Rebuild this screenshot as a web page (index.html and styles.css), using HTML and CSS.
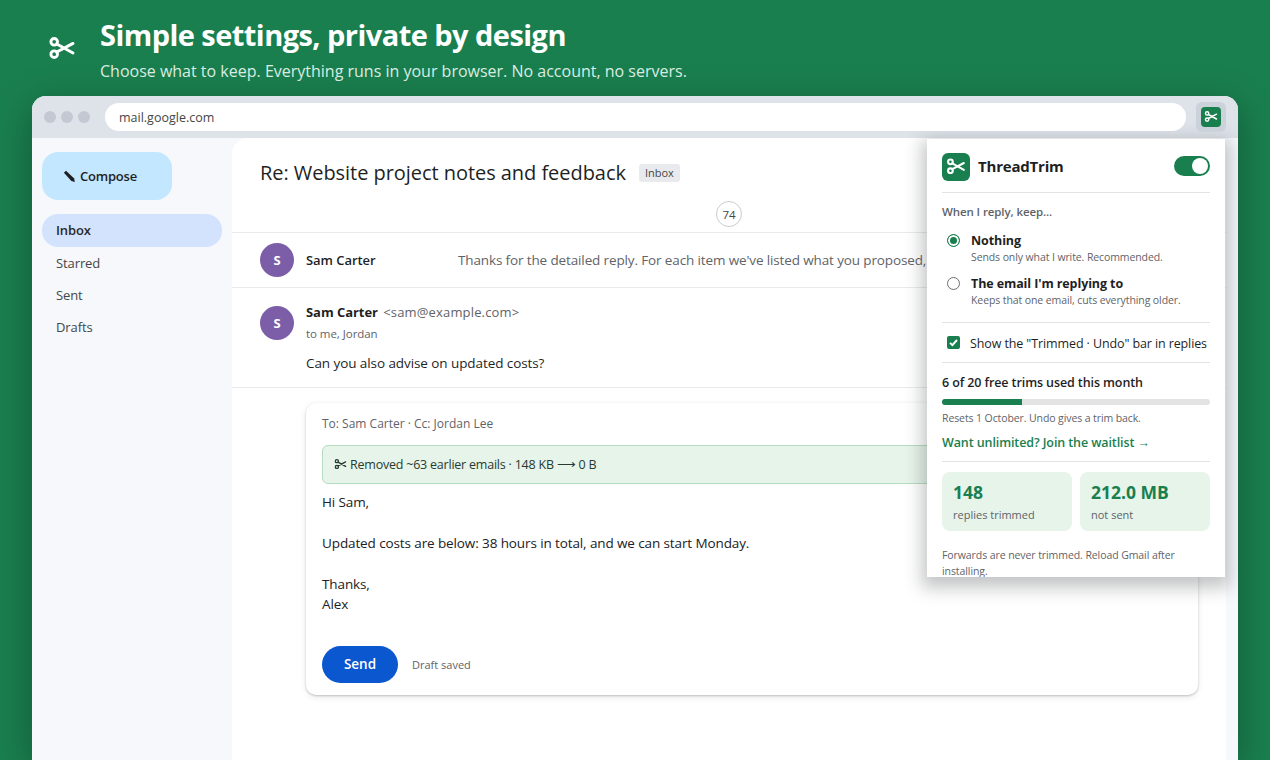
FILE: index.html
```html
<!DOCTYPE html>
<html lang="en">
<head>
<meta charset="utf-8">
<title>ThreadTrim</title>
<link rel="stylesheet" href="styles.css">
</head>
<body>
<svg class="defs" width="0" height="0" aria-hidden="true">
  <symbol id="scissors" viewBox="0 0 28 28">
    <circle cx="6.2" cy="6.8" r="3.3" fill="none" stroke="currentColor" stroke-width="2.9"/>
    <circle cx="6.2" cy="19.2" r="3.3" fill="none" stroke="currentColor" stroke-width="2.9"/>
    <path d="M8.8 9 25 18M8.8 17 25 8.4" fill="none" stroke="currentColor" stroke-width="2.9" stroke-linecap="round"/>
  </symbol>
</svg>
<header class="hero">
  <svg class="hero-icon"><use href="#scissors"/></svg>
  <div class="hero-text">
    <h1>Simple settings, private by design</h1>
    <p>Choose what to keep. Everything runs in your browser. No account, no servers.</p>
  </div>
</header>
<div class="browser">
  <div class="toolbar">
    <div class="dots"><span></span><span></span><span></span></div>
    <div class="url">mail.google.com</div>
    <div class="ext"><span class="ext-logo"><svg><use href="#scissors"/></svg></span></div>
  </div>
  <div class="gmail">
    <aside class="side">
      <button class="compose"><svg class="pen" viewBox="0 0 14 14"><path d="M1 3 3.2 .8l8.6 8.2 1 3.8-3.8-1z" fill="#1f1f1f"/></svg>Compose</button>
      <nav class="nav">
        <a class="active">Inbox</a>
        <a>Starred</a>
        <a>Sent</a>
        <a>Drafts</a>
      </nav>
    </aside>
    <main class="mail">
      <div class="subject"><h2>Re: Website project notes and feedback</h2><span class="chip">Inbox</span></div>
      <div class="count-row"><span class="count">74</span></div>
      <div class="collapsed">
        <span class="avatar">S</span>
        <span class="c-name">Sam Carter</span>
        <span class="c-snip">Thanks for the detailed reply. For each item we've listed what you proposed,</span>
      </div>
      <div class="message">
        <span class="avatar">S</span>
        <div class="m-body">
          <div class="m-from"><b>Sam Carter</b> <span>&lt;sam@example.com&gt;</span></div>
          <div class="m-to">to me, Jordan</div>
          <div class="m-text">Can you also advise on updated costs?</div>
        </div>
      </div>
      <section class="card">
        <div class="to">To: Sam Carter · Cc: Jordan Lee</div>
        <div class="trimmed"><svg><use href="#scissors"/></svg>Removed ~63 earlier emails · 148 KB ⟶ 0 B</div>
        <div class="draft">Hi Sam,<br><br>Updated costs are below: 38 hours in total, and we can start Monday.<br><br>Thanks,<br>Alex</div>
        <div class="actions"><button class="send">Send</button><span class="saved">Draft saved</span></div>
      </section>
    </main>
  </div>
  <div class="popup">
    <div class="p-head">
      <span class="p-logo"><svg><use href="#scissors"/></svg></span>
      <span class="p-name">ThreadTrim</span>
      <span class="toggle"><i></i></span>
    </div>
    <div class="p-sec p-keep">
      <div class="p-label">When I reply, keep...</div>
      <div class="opt"><span class="radio on"></span><div><b>Nothing</b><small>Sends only what I write. Recommended.</small></div></div>
      <div class="opt"><span class="radio"></span><div><b>The email I'm replying to</b><small>Keeps that one email, cuts everything older.</small></div></div>
    </div>
    <div class="p-sec p-check">
      <span class="check"><svg viewBox="0 0 13 13"><path d="M3 6.8 5.4 9.2 10 4" fill="none" stroke="#fff" stroke-width="1.9"/></svg></span>
      <span>Show the "Trimmed · Undo" bar in replies</span>
    </div>
    <div class="p-sec p-usage">
      <div class="u-title">6 of 20 free trims used this month</div>
      <div class="bar"><div class="fill" style="width:30%"></div></div>
      <div class="u-note">Resets 1 October. Undo gives a trim back.</div>
      <a class="u-link">Want unlimited? Join the waitlist →</a>
    </div>
    <div class="stats">
      <div class="stat"><b>148</b><span>replies trimmed</span></div>
      <div class="stat"><b>212.0 MB</b><span>not sent</span></div>
    </div>
    <p class="foot">Forwards are never trimmed. Reload Gmail after installing.</p>
  </div>
</div>
</body>
</html>
```
FILE: styles.css
```css
* { box-sizing: border-box; }
html, body { height: 100%; }
body {
  margin: 0;
  height: 760px;
  overflow: hidden;
  background: #1a7f4f;
  font-family: "Open Sans", "Noto Sans", "Liberation Sans", sans-serif;
  color: #1f1f1f;
  display: flex;
  flex-direction: column;
}
.defs { position: absolute; }
.hero {
  height: 96px;
  flex: none;
  display: flex;
  align-items: center;
  gap: 24px;
  padding: 0 0 0 48px;
  color: #fff;
}
.hero-icon { width: 28px; height: 28px; flex: none; margin-top: 2px; }
.hero-text { margin-top: 2px; }
.hero h1 { margin: 0; font-size: 29px; line-height: 38px; font-weight: 700; letter-spacing: -0.55px; }
.hero p { margin: 6px 0 0; font-size: 16px; line-height: 22px; color: #dcefe4; }

.browser {
  position: relative;
  margin: 0 32px;
  flex: 1;
  min-height: 0;
  background: #f6f8fc;
  border-radius: 14px 14px 0 0;
  overflow: hidden;
  box-shadow: 0 10px 40px rgba(0,0,0,.3);
  display: flex;
  flex-direction: column;
}
.toolbar {
  height: 42px;
  flex: none;
  background: #dee3ea;
  display: flex;
  align-items: flex-start;
  padding: 7px 12px 0 12px;
  position: relative;
}
.dots { display: flex; gap: 5px; width: 61px; padding-top: 8px; flex: none; }
.dots span { width: 12px; height: 12px; border-radius: 50%; background: #c3c8d2; }
.url {
  flex: 1;
  height: 28px;
  background: #fff;
  border-radius: 14px;
  font-size: 12.5px;
  line-height: 29px;
  padding-left: 14px;
  color: #444746;
  position: relative;
  z-index: 3;
}
.ext {
  width: 30px;
  height: 30px;
  margin: -1px 0 0 10px;
  background: #ccd2da;
  border-radius: 6px;
  display: flex;
  align-items: center;
  justify-content: center;
  flex: none;
  position: relative;
  z-index: 3;
}
.ext-logo {
  width: 20px; height: 20px;
  background: #1a7f4f;
  border-radius: 4px;
  color: #fff;
  display: flex; align-items: center; justify-content: center;
}
.ext-logo svg { width: 14px; height: 14px; }

.gmail { flex: 1; min-height: 0; display: flex; background: #f6f8fc; }
.side { width: 200px; flex: none; padding: 14px 10px 0; }
.compose {
  width: 130px;
  height: 48px;
  border: 0;
  border-radius: 16px;
  background: #c2e7ff;
  font: 600 13px "Open Sans", sans-serif;
  color: #1f1f1f;
  display: flex;
  align-items: center;
  gap: 4px;
  padding: 0 0 0 21px;
  letter-spacing: -0.2px;
}
.pen { width: 13px; height: 13px; }
.nav { margin-top: 14px; display: flex; flex-direction: column; }
.nav a {
  height: 32px;
  line-height: 32px;
  padding-left: 14px;
  border-radius: 16px;
  font-size: 13px;
  color: #444746;
  letter-spacing: -0.1px;
}
.nav a.active { height: 33px; line-height: 33px; background: #d3e3fd; color: #2a2a2a; font-weight: 600; }

.mail {
  flex: 1;
  min-width: 0;
  margin-right: 12px;
  background: #fff;
  border-radius: 16px 16px 0 0;
  overflow: hidden;
}
.subject { height: 62px; padding: 6px 28px 0; display: flex; align-items: center; gap: 13px; white-space: nowrap; }
.subject h2 { margin: 0; font-size: 20px; font-weight: 400; letter-spacing: -0.05px; color: #1f1f1f; }
.chip { background: #e8eaed; border-radius: 3px; font-size: 11px; height: 18px; line-height: 18px; padding: 0 6px; color: #444746; margin-top: 2px; }
.count-row { height: 32px; display: flex; justify-content: center; padding-top: 1px; }
.count {
  width: 26px; height: 26px;
  border: 1px solid #c9ccd0;
  border-radius: 50%;
  font-size: 11.5px;
  line-height: 25px;
  text-align: center;
  color: #444746;
  background: #fff;
}
.collapsed {
  height: 56px;
  border-top: 1px solid #e8eaed;
  border-bottom: 1px solid #e8eaed;
  padding: 0 28px;
  display: flex;
  align-items: center;
  white-space: nowrap;
  font-size: 13px;
  overflow: hidden;
}
.avatar {
  width: 34px; height: 34px;
  flex: none;
  border-radius: 50%;
  background: #7b5ea7;
  color: #fff;
  font-weight: 700;
  font-size: 13px;
  line-height: 34px;
  text-align: center;
}
.c-name { width: 152px; margin-left: 12px; font-weight: 600; flex: none; letter-spacing: -0.05px; }
.c-snip { color: #5f6368; font-size: 13.5px; letter-spacing: -0.13px; }
.message {
  height: 100px;
  border-bottom: 1px solid #e8eaed;
  padding: 18px 28px 0;
  display: flex;
  gap: 12px;
}
.m-from { font-size: 13px; line-height: 16px; margin-top: -2px; letter-spacing: -0.05px; }
.m-from b { font-weight: 700; }
.m-from span { color: #5f6368; font-size: 13px; margin-left: 2px; letter-spacing: 0.16px; }
.m-to { font-size: 11.5px; line-height: 16px; color: #5f6368; margin-top: 6px; letter-spacing: -0.05px; }
.m-text { font-size: 13.5px; line-height: 20px; margin-top: 11px; letter-spacing: -0.08px; }
.card {
  margin: 15px 28px 0 74px;
  height: 292px;
  background: #fff;
  border-radius: 10px;
  box-shadow: 0 1px 2px rgba(60,64,67,.25), 0 2px 6px rgba(60,64,67,.12);
  padding: 12px 16px 0;
  display: flex;
  flex-direction: column;
}
.to { font-size: 12px; line-height: 18px; color: #5f6368; }
.trimmed {
  margin-top: 12px;
  height: 39px;
  background: #e6f4ea;
  border: 1px solid #b5dcc0;
  border-radius: 6px;
  padding-left: 11px;
  display: flex;
  align-items: center;
  gap: 3px;
  font-size: 12.5px;
  color: #2a3a30;
  letter-spacing: -0.22px;
}
.trimmed svg { width: 13px; height: 13px; }
.draft { margin-top: 8px; font-size: 13.5px; line-height: 20.45px; letter-spacing: -0.11px; color: #202124; }
.actions { margin-top: 31px; display: flex; align-items: center; gap: 14px; }
.send {
  width: 76px; height: 37px;
  border: 0; border-radius: 19px;
  background: #0b57d0;
  color: #fff;
  font: 600 13.5px "Open Sans", sans-serif;
}
.saved { font-size: 11px; color: #5f6368; }

.popup {
  position: absolute;
  z-index: 2;
  left: 895px;
  top: 43px;
  width: 298px;
  height: 438px;
  background: #fff;
  overflow: hidden;
  box-shadow: 0 6px 16px 5px rgba(60,64,67,.3);
  padding: 14px 15px 0;
}
.p-head { height: 40px; display: flex; align-items: flex-start; border-bottom: 1px solid #e3e3e3; }
.p-logo {
  width: 28px; height: 28px;
  background: #1a7f4f;
  border-radius: 6px;
  color: #fff;
  display: flex; align-items: center; justify-content: center;
}
.p-logo svg { width: 20px; height: 20px; }
.p-name { margin-left: 8px; font-size: 15px; font-weight: 700; line-height: 27px; color: #1f1f1f; letter-spacing: -0.2px; }
.toggle { margin: 3px 0 0 auto; width: 36px; height: 20px; border-radius: 10px; background: #1a7f4f; position: relative; }
.toggle i { position: absolute; right: 2px; top: 2px; width: 16px; height: 16px; border-radius: 50%; background: #fff; }
.p-sec { border-bottom: 1px solid #e3e3e3; }
.p-keep { height: 130px; padding-top: 11px; }
.p-label { font-size: 11.5px; line-height: 16px; font-weight: 600; color: #5f6368; letter-spacing: -0.1px; }
.opt { display: flex; gap: 11px; padding-left: 5px; margin-top: 12px; }
.opt + .opt { margin-top: 10px; }
.opt b { display: block; font-size: 12.5px; line-height: 18px; font-weight: 700; color: #1f1f1f; letter-spacing: -0.1px; }
.opt small { display: block; font-size: 10.5px; line-height: 15px; color: #5f6368; letter-spacing: -0.1px; }
.radio { width: 13px; height: 13px; margin-top: 2px; border-radius: 50%; border: 1px solid #6b6f73; flex: none; background: #fff; }
.radio.on { border-color: #1a7f4f; background: #1a7f4f; box-shadow: inset 0 0 0 2px #fff; }
.p-check { height: 40px; display: flex; align-items: center; gap: 10px; padding-left: 5px; font-size: 12.5px; color: #1f1f1f; letter-spacing: -0.11px; white-space: nowrap; }
.p-check span + span { margin-top: 1px; }
.check { width: 13px; height: 13px; background: #1a7f4f; border-radius: 2px; flex: none; display: block; }
.check svg { display: block; width: 13px; height: 13px; }
.p-usage { height: 99px; padding-top: 11px; }
.u-title { font-size: 12.5px; line-height: 18px; font-weight: 600; color: #1f1f1f; letter-spacing: -0.1px; }
.bar { margin-top: 7px; height: 6px; border-radius: 3px; background: #e3e3e3; overflow: hidden; }
.fill { height: 100%; background: #1a7f4f; }
.u-note { margin-top: 5px; font-size: 10.5px; line-height: 16px; color: #5f6368; letter-spacing: -0.1px; }
.u-link { display: block; margin-top: 8px; font-size: 12.5px; line-height: 18px; font-weight: 600; color: #1a7f4f; letter-spacing: -0.1px; }
.stats { display: flex; gap: 8px; margin-top: 10px; }
.stat { flex: 1; height: 59px; border-radius: 8px; background: #e6f4ea; padding: 8px 11px 0; }
.stat b { display: block; font-size: 17.5px; line-height: 24px; color: #1a7f4f; font-weight: 700; }
.stat span { display: block; margin-top: 3px; font-size: 11px; line-height: 16px; color: #5f6368; }
.foot { margin: 16px 0 0; font-size: 10.5px; line-height: 16px; color: #5f6368; letter-spacing: -0.08px; }
```
